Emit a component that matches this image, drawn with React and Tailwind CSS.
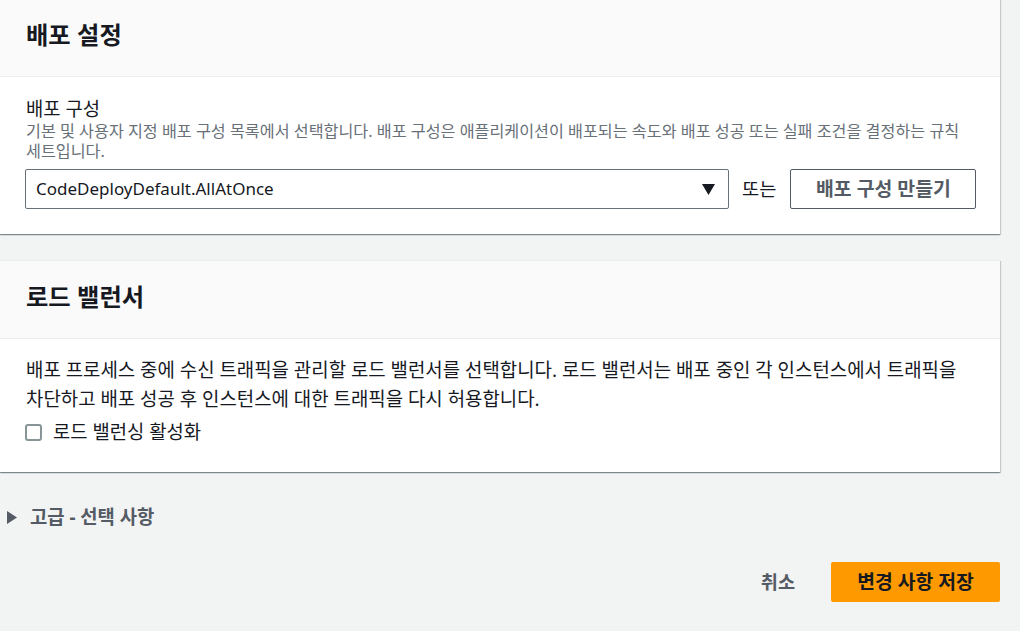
export default function App() {
  const card = "bg-white shadow-[0_1px_1px_0_rgba(0,28,36,0.3),1px_1px_1px_0_rgba(0,28,36,0.15),-1px_1px_1px_0_rgba(0,28,36,0.15)]";
  return (
    <div className="min-h-[631px] bg-[#f2f3f3] font-['Noto_Sans','Noto_Sans_CJK_KR',sans-serif] text-[#16191f] overflow-hidden">
      <div className="w-[1000px] -mt-[2px]">
        {/* Card 1 */}
        <div className={card}>
          <div className="bg-[#fafafa] border-t border-[#eaeded] border-b px-[26px] pt-[20px] pb-[25px]">
            <h2 className="text-[24.3px] leading-[32px] font-bold">배포 설정</h2>
          </div>
          <div className="px-[25px] pt-[20px] pb-[25px]">
            <div className="pl-[1px] text-[18.8px] leading-[24px]">배포 구성</div>
            <div className="pl-[1px] text-[16.2px] leading-[20px] text-[#687078] whitespace-nowrap">
              기본 및 사용자 지정 배포 구성 목록에서 선택합니다. 배포 구성은 애플리케이션이 배포되는 속도와 배포 성공 또는 실패 조건을 결정하는 규칙
              <br />
              세트입니다.
            </div>
            <div className="mt-[8px] flex items-center h-[40px] whitespace-nowrap">
              <div className="w-[704px] shrink-0 h-[40px] border border-[#687078] rounded-[2px] flex items-center justify-between pl-[10px] pr-[13px]">
                <span className="text-[17px]">CodeDeployDefault.AllAtOnce</span>
                <svg width="13" height="11" viewBox="0 0 13 11">
                  <polygon points="0,0 13,0 6.5,11" fill="#16191f" />
                </svg>
              </div>
              <span className="ml-[13px] shrink-0 text-[18.7px]">또는</span>
              <button className="ml-[14px] shrink-0 w-[186px] h-[40px] border border-[#545b64] rounded-[2px] text-[19.4px] font-bold text-[#545b64] bg-white">
                배포 구성 만들기
              </button>
            </div>
          </div>
        </div>

        {/* Card 2 */}
        <div className={card + " mt-[26px]"}>
          <div className="bg-[#fafafa] border-t border-[#eaeded] border-b px-[26px] pt-[20px] pb-[25px]">
            <h2 className="text-[24.3px] leading-[32px] font-bold">로드 밸런서</h2>
          </div>
          <div className="px-[25px] pt-[17px] pb-[28px]">
            <p className="pl-[1px] text-[18.9px] leading-[29px] whitespace-nowrap">
              배포 프로세스 중에 수신 트래픽을 관리할 로드 밸런서를 선택합니다. 로드 밸런서는 배포 중인 각 인스턴스에서 트래픽을
              <br />
              차단하고 배포 성공 후 인스턴스에 대한 트래픽을 다시 허용합니다.
            </p>
            <label className="mt-[6px] flex items-center h-[24px]">
              <span className="w-[17px] h-[17px] border-2 border-[#879596] rounded-[3px] bg-white"></span>
              <span className="ml-[11px] text-[18.8px] leading-[24px]">로드 밸런싱 활성화</span>
            </label>
          </div>
        </div>

        {/* Advanced */}
        <div className="mt-[33px] flex items-center h-[24px] pl-[7px]">
          <svg width="10" height="13" viewBox="0 0 10 13">
            <polygon points="0,0 10,6.5 0,13" fill="#545b64" />
          </svg>
          <span className="ml-[13px] text-[18.8px] font-bold text-[#545b64]">고급 - 선택 사항</span>
        </div>

        {/* Actions */}
        <div className="mt-[33px] flex items-center justify-end">
          <button className="text-[18.6px] font-bold text-[#545b64] mr-[36px]">취소</button>
          <button className="w-[169px] h-[40px] bg-[#ff9900] rounded-[2px] text-[19.3px] font-bold text-[#16191f]">
            변경 사항 저장
          </button>
        </div>
      </div>
    </div>
  );
}
